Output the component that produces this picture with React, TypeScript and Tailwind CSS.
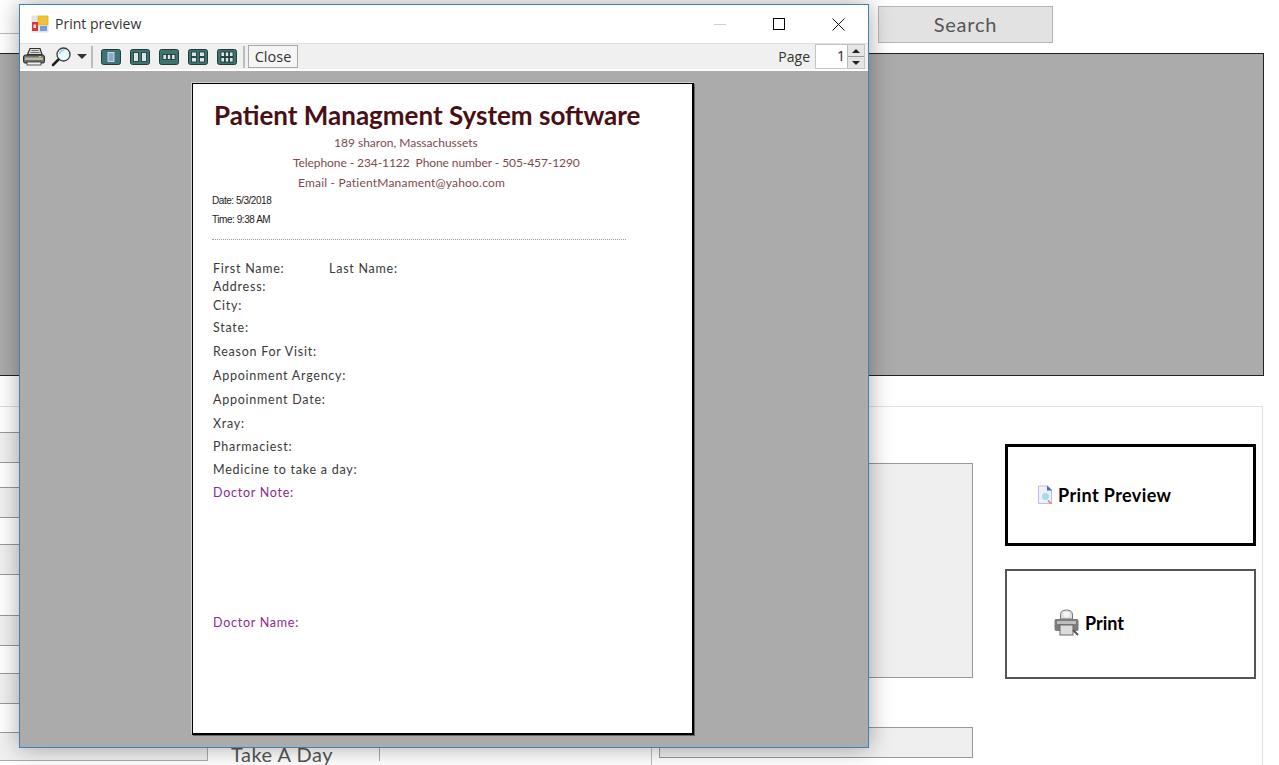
const gothic = "font-['Lato','Liberation_Sans',sans-serif]"

const gridRows = [
  { h: 'h-[26px]', bg: 'bg-white' },
  { h: 'h-[30px]', bg: 'bg-[#f0f0f0]' },
  { h: 'h-[25px]', bg: 'bg-white' },
  { h: 'h-[30px]', bg: 'bg-[#f0f0f0]' },
  { h: 'h-[27px]', bg: 'bg-white' },
  { h: 'h-[30px]', bg: 'bg-[#f0f0f0]' },
  { h: 'h-[41px]', bg: 'bg-white' },
  { h: 'h-[30px]', bg: 'bg-[#f0f0f0]' },
  { h: 'h-[28px]', bg: 'bg-white' },
  { h: 'h-[30px]', bg: 'bg-[#f0f0f0]' },
  { h: 'h-[29px]', bg: 'bg-white' },
]

// each row is as tall as the distance to the next one
const fields = [
  { label: 'Address:', h: 'h-[19px]' },
  { label: 'City:', h: 'h-[22px]' },
  { label: 'State:', h: 'h-[24px]' },
  { label: 'Reason For Visit:', h: 'h-[24px]' },
  { label: 'Appoinment Argency:', h: 'h-[24px]' },
  { label: 'Appoinment Date:', h: 'h-[24px]' },
  { label: 'Xray:', h: 'h-[23px]' },
  { label: 'Pharmaciest:', h: 'h-[23px]' },
  { label: 'Medicine to take a day:', h: 'h-[23px]' },
]

function AppIcon() {
  return (
    <svg width="18" height="18" viewBox="0 0 18 18">
      <rect x="0.5" y="0.5" width="17" height="17" fill="#e4e4e4" />
      <rect x="7" y="1" width="10" height="9" fill="#f2c230" stroke="#d9a520" strokeWidth="0.5" />
      <rect x="1" y="7" width="6" height="9" fill="#d23a3a" />
      <rect x="2.5" y="9.5" width="2.5" height="3.5" fill="#f3dada" />
      <rect x="9" y="11" width="7" height="5" fill="#6f9fe0" />
    </svg>
  )
}

function PrinterIcon() {
  return (
    <svg width="22" height="19" viewBox="0 0 22 19">
      <path d="M7 1.500h10l2 6H4.500z" fill="#d8d8d8" stroke="#333" strokeWidth="1.2" />
      <path d="M8.500 3.500h7M7.500 5.500h9" stroke="#777" strokeWidth="1" />
      <path d="M2.500 8h17q2 0 2 2v4.500q0 1.500-1.500 1.500H2q-1.500 0-1.500-1.500V10q0-2 2-2z" fill="#6f6f6f" stroke="#2a2a2a" strokeWidth="1" />
      <rect x="2" y="10.500" width="18" height="2.500" fill="#b9b9a0" />
      <rect x="4" y="15" width="14" height="3" fill="#eeeeee" stroke="#333" strokeWidth="0.8" />
      <rect x="16" y="9" width="2" height="1" fill="#d7e04a" />
    </svg>
  )
}

function MagnifierIcon() {
  return (
    <svg width="21" height="20" viewBox="0 0 21 20">
      <circle cx="12.500" cy="7.500" r="6.500" fill="#e9f8fb" stroke="#3a3a3a" strokeWidth="1.300" />
      <path d="M8.500 7q1-3.500 5-4" stroke="#8fd0e2" strokeWidth="1.500" fill="none" />
      <path d="M7.500 12.500L2 18" stroke="#1f1f1f" strokeWidth="2.500" strokeLinecap="round" />
    </svg>
  )
}

// little page-layout buttons on the toolbar, teal with pale pages
function LayoutIcon({ cols, rows }: { cols: number; rows: number }) {
  const pw = cols === 1 ? 6 : cols === 2 ? 5 : 3.500
  const ph = rows === 2 ? 4.500 : cols === 3 ? 5 : 9
  const pages = []
  const gapX = cols === 2 ? 3 : 0.800
  const totalW = cols * pw + (cols - 1) * gapX
  const totalH = rows * ph + (rows - 1) * 1
  for (let r = 0; r < rows; r++) {
    for (let c = 0; c < cols; c++) {
      pages.push(
        <rect
          key={`${r}-${c}`}
          x={(20 - totalW) / 2 + c * (pw + gapX)}
          y={(16 - totalH) / 2 + r * (ph + 1)}
          width={pw}
          height={ph}
          fill={cols === 1 ? '#8fa6cf' : '#dde6e6'}
          stroke={cols === 1 ? '#e4eaf5' : '#14302f'}
          strokeWidth="0.8"
        />,
      )
    }
  }
  return (
    <svg width="20" height="16" viewBox="0 0 20 16">
      <rect x="0.500" y="0.500" width="19" height="15" rx="2" fill="#3f7371" stroke="#1f3b3b" />
      {pages}
    </svg>
  )
}

function DocIcon() {
  return (
    <svg width="16" height="20" viewBox="0 0 16 20">
      <path d="M1.500 1h9l4 4v13.500h-13z" fill="#eef0fb" stroke="#bfbcec" />
      <path d="M10 .500v5h5z" fill="#3f63d8" />
      <circle cx="8.500" cy="11.500" r="3.500" fill="#a6dde8" />
      <path d="M11 15.500l3.500 3.500" stroke="#d98a4a" strokeWidth="1.600" />
    </svg>
  )
}

function GrayPrinterIcon() {
  return (
    <svg width="25" height="28" viewBox="0 0 25 28">
      <path d="M6.500 10V6q0-5 6-5t6 5v4z" fill="#dedede" stroke="#777" />
      <circle cx="12.500" cy="5.500" r="3" fill="#f4f4f4" />
      <path d="M2 10h21q1.500 0 1.500 2v8q0 2-1.500 2H2q-1.500 0-1.500-2v-8q0-2 1.500-2z" fill="#7c7c7c" />
      <rect x="3" y="12" width="19" height="3" fill="#bdbdbd" />
      <rect x="6" y="16" width="13" height="10" fill="#dcdcdc" stroke="#6a6a6a" />
      <path d="M19 21l5 5" stroke="#555" strokeWidth="2" />
    </svg>
  )
}

function PrintPreviewWindow() {
  return (
    <div className="absolute left-[19px] top-[4px] w-[850px] h-[744px] flex flex-col border border-[#3d83b8] bg-[#ababab] shadow-[0_0_22px_rgba(0,0,0,0.35)]">
      {/* title bar */}
      <div className="flex items-center h-[38px] bg-white shrink-0">
        <div className="ml-[11px]"><AppIcon /></div>
        <span className="ml-[6px] pb-[2px] text-[14px] text-[#333] font-['Open_Sans',sans-serif]">Print preview</span>
        <div className="ml-auto flex items-center">
          <div className="w-[12px] h-px bg-[#cfcfcf] mr-[47px]" />
          <div className="w-[12px] h-[12px] border border-black mr-[47px]" />
          <svg className="mr-[23px]" width="13" height="13" viewBox="0 0 13 13">
            <path d="M.5.500l12 12M12.500.500l-12 12" stroke="#111" strokeWidth="1" />
          </svg>
        </div>
      </div>
      {/* toolbar */}
      <div className="flex items-center h-[26px] bg-[#f0f0f0] border-t border-[#e0e0e0] shrink-0">
        <div className="ml-[3px]"><PrinterIcon /></div>
        <div className="ml-[6px]"><MagnifierIcon /></div>
        <div className="ml-[5px] w-0 h-0 border-x-[5px] border-x-transparent border-t-[5px] border-t-[#333]" />
        <div className="ml-[4px] w-[2px] h-[22px] bg-[#bdbdbd]" />
        <div className="ml-[8px] flex gap-[9px]">
          <LayoutIcon cols={1} rows={1} />
          <LayoutIcon cols={2} rows={1} />
          <LayoutIcon cols={3} rows={1} />
          <LayoutIcon cols={2} rows={2} />
          <LayoutIcon cols={3} rows={2} />
        </div>
        <div className="ml-[6px] w-[2px] h-[22px] bg-[#bdbdbd]" />
        <div className="ml-[3px] w-[50px] h-[23px] border border-[#a9a9a9] bg-[#f5f5f5] flex items-center justify-center text-[14.500px] text-[#333] font-['Open_Sans',sans-serif]">Close</div>
        <span className="ml-auto text-[14px] text-[#333] font-['Open_Sans',sans-serif]">Page</span>
        <div className="ml-[5px] mr-[3px] w-[50px] h-[25px] flex border border-[#c4c4c4] bg-white">
          <span className="flex-1 text-right pr-[2px] text-[14px] leading-[22px] text-[#222] font-['Open_Sans',sans-serif]">1</span>
          <div className="w-[17px] flex flex-col bg-[#e4e4e4] border-l border-[#bbb]">
            <div className="flex-1 flex items-center justify-center border-b border-[#999]">
              <div className="w-0 h-0 border-x-[4px] border-x-transparent border-b-[4px] border-b-[#222]" />
            </div>
            <div className="flex-1 flex items-center justify-center">
              <div className="w-0 h-0 border-x-[4px] border-x-transparent border-t-[4px] border-t-[#222]" />
            </div>
          </div>
        </div>
      </div>
      <div className="h-[2px] bg-white shrink-0" />
      {/* preview canvas */}
      <div className="flex-1 pt-[12px] pl-[172px]">
        <div className="w-[502px] h-[652px] bg-white border-t border-l border-r-2 border-b-2 border-black shadow-[1px_1px_0_#666,-1px_-1px_0_#d0d0d0] flex flex-col">
          <div className="h-[49px] pl-[21px] pt-[15px] text-[26px] leading-[32px] font-bold font-['Lato',sans-serif] text-[#4a0f14] whitespace-nowrap">
            Patient Managment System software
          </div>
          <div className="text-[12px] font-['Lato',sans-serif] text-[#7c4a4f] whitespace-nowrap">
            <div className="h-[20px] leading-[20px] pl-[141px]">189 sharon, Massachussets</div>
            <div className="h-[20px] leading-[20px] pl-[100px] tracking-[-0.08px]">Telephone - 234-1122&nbsp; Phone number - 505-457-1290</div>
            <div className="h-[20px] leading-[20px] pl-[105px] tracking-[0.2px]">Email - PatientManament@yahoo.com</div>
          </div>
          <div className="text-[10px] font-['Liberation_Sans',sans-serif] text-[#222] tracking-[-0.45px] pl-[19px] whitespace-nowrap">
            <div className="h-[17px] leading-[15px]">Date: 5/3/2018</div>
            <div className="h-[19px] leading-[19px]">Time: 9:38 AM</div>
          </div>
          <div className="mt-[10px] ml-[19px] w-[414px] border-t border-dotted border-[#999]" />
          <div className={`mt-[20px] pl-[20px] text-[12.500px] leading-[18px] tracking-[0.75px] text-[#3a3a3a] whitespace-nowrap ${gothic}`}>
            <div className="flex h-[18px]">
              <span className="w-[116px]">First Name:</span>
              <span>Last Name:</span>
            </div>
            {fields.map(f => (
              <div key={f.label} className={f.h}>{f.label}</div>
            ))}
            <div className="h-[130px] text-[#8b2a8f]">Doctor Note:</div>
            <div className="text-[#8b2a8f]">Doctor Name:</div>
          </div>
        </div>
      </div>
    </div>
  )
}

export default function App() {
  return (
    <div className="relative w-[1279px] h-[765px] overflow-hidden bg-white">
      {/* top search row */}
      <div className="flex h-[53px]">
        <div className="w-[20px] h-[34px] border-b border-[#bbb]" />
        <div className={`ml-[858px] mt-[6px] w-[175px] h-[37px] pb-[2px] bg-[#e2e2e2] border border-[#b5b5b5] flex items-center justify-center text-[20px] tracking-[0.8px] text-[#555] ${gothic}`}>
          Search
        </div>
      </div>

      {/* big grey panel */}
      <div className="w-[1264px] h-[323px] bg-[#ababab] border border-l-0 border-[#222]" />

      <div className="mt-[30px] flex">
        {/* data grid on the left */}
        <div className="w-[652px] h-[359px] border-r border-[#bbb] flex flex-col">
          {gridRows.map((r, i) => (
            <div key={i} className={`${r.h} ${r.bg} border-t ${i === 0 ? 'border-[#ddd]' : 'border-[#999]'}`} />
          ))}
          <div className="flex h-[29px] border-t border-[#999]">
            <div className="w-[208px] bg-[#f0f0f0] border-b border-r border-[#aaa]" />
            <div className={`w-[172px] border-r border-[#aaa] pl-[23px] text-[20px] leading-[42px] tracking-[0.5px] text-[#555] whitespace-nowrap ${gothic}`}>
              Take A Day
            </div>
          </div>
        </div>

        {/* group box */}
        <div className="w-[611px] h-[359px] border-t border-r border-[#e2e2e2] flex pl-[7px]">
          <div className="w-[314px]">
            <div className="mt-[56px] h-[215px] bg-[#efefef] border border-[#999]" />
            <div className="mt-[49px] h-[31px] bg-[#efefef] border border-[#999]" />
          </div>
          <div className="ml-[32px] w-[251px]">
            <div className={`mt-[37px] h-[102px] border-[3px] border-black flex items-center pl-[29px] text-[18px] tracking-[0.4px] font-bold text-black ${gothic}`}>
              <DocIcon />
              <span className="ml-[5px]">Print Preview</span>
            </div>
            <div className={`mt-[23px] h-[110px] pb-[2px] border-2 border-[#555] flex items-center pl-[47px] text-[18px] font-bold text-black ${gothic}`}>
              <GrayPrinterIcon />
              <span className="ml-[6px]">Print</span>
            </div>
          </div>
        </div>
      </div>

      <PrintPreviewWindow />
    </div>
  )
}
